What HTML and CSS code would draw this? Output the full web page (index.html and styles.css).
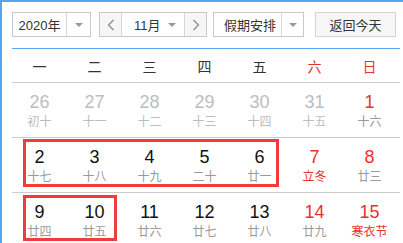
FILE: index.html
```html
<!DOCTYPE html>
<html lang="zh">
<head>
<meta charset="utf-8">
<link rel="stylesheet" href="styles.css">
</head>
<body>
<div class="frame">
  <div class="toolbar">
    <div class="select year">
      <span class="select-text">2020年</span>
      <span class="select-arrow"><i class="tri"></i></span>
    </div>
    <div class="month-group">
      <span class="nav-btn"><svg width="8" height="12" viewBox="0 0 8 12"><path d="M6.5 1 L1.5 6 L6.5 11" fill="none" stroke="#888" stroke-width="1.2"/></svg></span>
      <span class="month-mid"><span class="month-text">11月</span><i class="tri"></i></span>
      <span class="nav-btn next"><svg width="8" height="12" viewBox="0 0 8 12"><path d="M1.5 1 L6.5 6 L1.5 11" fill="none" stroke="#888" stroke-width="1.2"/></svg></span>
    </div>
    <div class="select holiday">
      <span class="select-text">假期安排</span>
      <span class="select-arrow"><i class="tri"></i></span>
    </div>
    <div class="today-btn">返回今天</div>
  </div>

  <div class="calendar">
    <div class="weekdays">
      <span>一</span><span>二</span><span>三</span><span>四</span><span>五</span><span class="red">六</span><span class="red">日</span>
    </div>
    <div class="body">
      <div class="week">
        <div class="day other"><b>26</b><em>初十</em></div>
        <div class="day other"><b>27</b><em>十一</em></div>
        <div class="day other"><b>28</b><em>十二</em></div>
        <div class="day other"><b>29</b><em>十三</em></div>
        <div class="day other"><b>30</b><em>十四</em></div>
        <div class="day other"><b>31</b><em>十五</em></div>
        <div class="day weekend"><b>1</b><em>十六</em></div>
      </div>
      <div class="week">
        <div class="day"><b>2</b><em>十七</em></div>
        <div class="day"><b>3</b><em>十八</em></div>
        <div class="day"><b>4</b><em>十九</em></div>
        <div class="day"><b>5</b><em>二十</em></div>
        <div class="day"><b>6</b><em>廿一</em></div>
        <div class="day weekend"><b>7</b><em class="fest">立冬</em></div>
        <div class="day weekend"><b>8</b><em>廿三</em></div>
      </div>
      <div class="week">
        <div class="day"><b>9</b><em>廿四</em></div>
        <div class="day"><b>10</b><em>廿五</em></div>
        <div class="day"><b>11</b><em>廿六</em></div>
        <div class="day"><b>12</b><em>廿七</em></div>
        <div class="day"><b>13</b><em>廿八</em></div>
        <div class="day weekend"><b>14</b><em>廿九</em></div>
        <div class="day weekend"><b>15</b><em class="fest">寒衣节</em></div>
      </div>
      <div class="range r1"></div>
      <div class="range r2"></div>
    </div>
  </div>
</div>
</body>
</html>
```

FILE: styles.css
```css
* { box-sizing: border-box; }
html, body { margin: 0; padding: 0; background: #fff; }
body {
  font-family: "Liberation Sans", Arial, "Noto Sans CJK SC", sans-serif;
  width: 403px;
  height: 243px;
  overflow: hidden;
}
.frame {
  border-top: 2px solid #55a5f5;
  border-left: 2px solid #55a5f5;
  height: 243px;
  padding: 10px 0 0 10px;
}
.toolbar {
  display: flex;
  height: 25px;
  font-size: 13px;
  color: #333;
}
.select {
  display: flex;
  border: 1px solid #c8c8c8;
  background: #fff;
}
.select-text {
  flex: 1;
  display: flex;
  align-items: center;
  justify-content: center;
}
.select-arrow {
  width: 24px;
  border-left: 1px solid #d8d8d8;
  display: flex;
  align-items: center;
  justify-content: center;
}
.tri {
  display: block;
  width: 0;
  height: 0;
  border-left: 4px solid transparent;
  border-right: 4px solid transparent;
  border-top: 4px solid #999;
}
.year { width: 79px; }
.month-group {
  margin-left: 8px;
  width: 108px;
  display: flex;
  border: 1px solid #c8c8c8;
}
.nav-btn {
  width: 22px;
  background: #f6f6f6;
  display: flex;
  align-items: center;
  justify-content: center;
  border-right: 1px solid #d8d8d8;
}
.nav-btn.next {
  border-right: 0;
  border-left: 1px solid #d8d8d8;
}
.month-mid {
  flex: 1;
  display: flex;
  align-items: center;
  padding: 0 8px 0 12px;
  justify-content: space-between;
}
.holiday { margin-left: 6px; width: 91px; }
.holiday .select-arrow { width: 22px; }
.holiday .select-text { justify-content: flex-start; padding-left: 10px; }
.today-btn {
  margin-left: 11px;
  width: 81px;
  border: 1px solid #d4d4d4;
  background: #f6f6f6;
  display: flex;
  align-items: center;
  justify-content: center;
  font-family: "Noto Sans CJK SC", sans-serif;
}
.select-text, .month-text { font-family: "Liberation Sans", Arial, "Noto Sans CJK SC", sans-serif; }
.calendar {
  margin-top: 11px;
  width: 388px;
  border-top: 1px solid #55a5f5;
}
.weekdays {
  display: grid;
  grid-template-columns: repeat(7, 55px);
  height: 34px;
  align-items: center;
  border-bottom: 1px solid #cccccc;
  font-family: "Noto Sans CJK SC", sans-serif;
  font-size: 14px;
  color: #333;
  text-align: center;
}
.weekdays .red { color: #e8322f; }
.body { position: relative; }
.week {
  display: grid;
  grid-template-columns: repeat(7, 55px);
  height: 55px;
  border-bottom: 1px solid #cccccc;
}
.day {
  display: flex;
  flex-direction: column;
  align-items: center;
  padding-top: 9px;
}
.day b {
  font-weight: normal;
  font-size: 18px;
  line-height: 20px;
  color: #111;
}
.day em {
  font-style: normal;
  font-family: "Noto Sans CJK SC", sans-serif;
  font-size: 12px;
  line-height: 17px;
  color: #9a9a9a;
}
.day.other b, .day.other em { color: #bdbdbd; }
.day.weekend b { color: #e8322f; }
.day em.fest { color: #e8322f; }
.range {
  position: absolute;
  border: 3px solid #f03c3c;
}
.r1 { left: 11px; top: 56px; width: 256px; height: 48px; }
.r2 { left: 11px; top: 112px; width: 94px; height: 46px; }
```
